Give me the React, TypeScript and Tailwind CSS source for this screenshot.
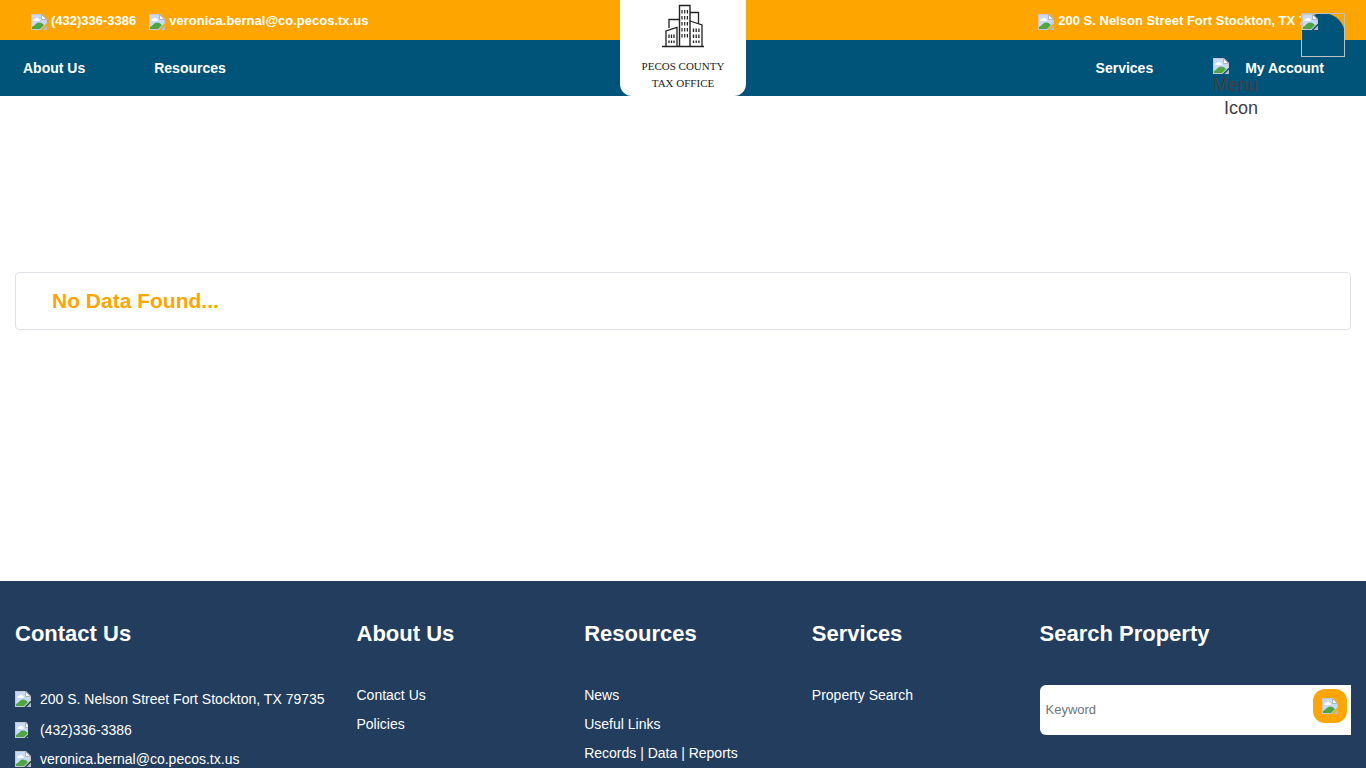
import { useState } from "react";

interface LinkColumn {
  title: string;
  links: string[];
}

const linkColumns: LinkColumn[] = [
  { title: "About Us", links: ["Contact Us", "Policies"] },
  {
    title: "Resources",
    links: ["News", "Useful Links", "Records | Data | Reports"],
  },
  { title: "Services", links: ["Property Search"] },
];

const PHONE = "(432)336-3386";
const EMAIL = "veronica.bernal@co.pecos.tx.us";
const ADDRESS = "200 S. Nelson Street Fort Stockton, TX 79735";

// Placeholder shown where an image is missing
const ImageIcon = ({ narrow = false }: { narrow?: boolean }) => (
  <svg
    viewBox={narrow ? "0 0 13 16" : "0 0 16 16"}
    className={narrow ? "h-4 w-[13px] shrink-0" : "h-4 w-4 shrink-0"}
    aria-hidden="true"
  >
    <path d="M0 0H11L16 5V9.5L9.5 16H0Z" fill="#c3c7ce" />
    <path d="M1 1H10.5L15 5.5V9L9 15H1Z" fill="#c9daf8" />
    <path
      d="M2.5 7C2 5.4 3.4 4.4 4.5 4.8C5 3.2 7.2 3.4 7.5 4.8C8.9 4.8 9.2 6.4 8.4 7Z"
      fill="#fff"
    />
    <path
      d="M1 15V13C3.5 12 5 8.5 8 8.5C10.2 8.5 11.8 9.6 12.8 11.2L9 15Z"
      fill="#4fa540"
    />
    <path d="M10.5 0.5V5.5H15.5Z" fill="#fafbfd" stroke="#b0b4bb" />
    <path d="M16 11.5V16H11.5Z" fill="#b3bccb" />
  </svg>
);

const Logo = () => (
  <a
    href="#"
    className="absolute top-0 left-1/2 flex h-24 w-[126px] -translate-x-1/2 flex-col items-center rounded-b-xl bg-white pt-1 font-['Liberation_Serif',serif] text-[11px] leading-[17px] font-normal text-[#222]"
  >
    <svg
      viewBox="0 0 44 44"
      className="mb-2.5 h-11 w-11 shrink-0"
      fill="none"
      stroke="#222"
      aria-hidden="true"
    >
      <path d="M1 42.5H43" strokeWidth="1.3" />
      <path d="M18.5 42V1.5H29V42" strokeWidth="1.4" />
      <path d="M29 8.5H37.5V19.5M29 17L41 21V42" strokeWidth="1.3" />
      <path d="M8 24V15.5H18.5M5 42V27L16 23.5V42" strokeWidth="1.3" />
      <path
        d="M21 6V34M23.7 6V34M26.4 6V34"
        strokeWidth="1.2"
        strokeDasharray="3.5 2.5"
      />
      <path
        d="M32.5 24.5V39M35.2 24.5V39M37.9 24.5V39M8 30.5V39M10.5 30.5V39M13 30.5V39"
        strokeWidth="1.3"
        strokeDasharray="3.5 2.5"
      />
    </svg>
    <span>PECOS COUNTY</span>
    <span>TAX OFFICE</span>
  </a>
);

const TopBarItem = ({ text }: { text: string }) => (
  <a href="#" className="flex gap-1">
    <span className="pt-px">
      <ImageIcon />
    </span>
    {text}
  </a>
);

const Header = () => (
  <header className="relative font-bold text-white">
    <div className="flex h-10 items-center justify-between bg-[#ffa500] px-[31px] pt-[3px] text-[13px] leading-4">
      <div className="flex gap-[13px]">
        <TopBarItem text={PHONE} />
        <TopBarItem text={EMAIL} />
      </div>
      <TopBarItem text={ADDRESS} />
    </div>

    <nav className="flex h-14 items-center justify-between bg-[#00547a] pr-[42px] pl-[23px] text-sm">
      <div className="flex gap-[69px]">
        <a href="#">About Us</a>
        <a href="#">Resources</a>
      </div>
      <div className="flex gap-[92px]">
        <a href="#">Services</a>
        <a href="#" className="relative z-10">
          My Account
        </a>
      </div>
    </nav>

    <Logo />

    {/* Menu toggle hangs over the bottom edge of the nav */}
    <button
      type="button"
      className="absolute top-[58px] right-[108px] flex w-[45px] flex-col items-end text-lg leading-[23px] font-normal text-[#404040]"
    >
      <span className="self-start">
        <ImageIcon />
      </span>
      <span>Menu</span>
      <span>Icon</span>
    </button>

    {/* Scroll to top */}
    <button
      type="button"
      aria-label="Back to top"
      className="absolute top-[13px] right-[21px] h-11 w-11 rounded-full bg-[#00547a]"
    >
      <span className="flex h-11 w-11 border border-[#c0c0c0]">
        <ImageIcon />
      </span>
    </button>
  </header>
);

const Footer = () => {
  const [keyword, setKeyword] = useState("");

  return (
    <footer className="grid grid-cols-12 bg-[#223d5e] pt-[37px] text-sm text-white">
      <div className="col-span-3 px-[15px]">
        <h2 className="mb-[33px] text-[22px] leading-8 font-bold">
          Contact Us
        </h2>
        <ul className="flex flex-col">
          <li className="flex h-8 items-center gap-[9px]">
            <ImageIcon />
            <a href="#" className="whitespace-nowrap">
              {ADDRESS}
            </a>
          </li>
          <li className="flex h-[30px] items-center gap-3">
            <ImageIcon narrow />
            <a href="#">{PHONE}</a>
          </li>
          <li className="flex h-7 items-center gap-[9px]">
            <ImageIcon />
            <a href="#">{EMAIL}</a>
          </li>
        </ul>
      </div>

      {linkColumns.map((column) => (
        <div key={column.title} className="col-span-2 px-[15px]">
          <h2 className="mb-[31px] text-[22px] leading-8 font-bold">
            {column.title}
          </h2>
          <ul>
            {column.links.map((link) => (
              <li key={link} className="leading-[29px]">
                <a href="#" className="whitespace-nowrap">
                  {link}
                </a>
              </li>
            ))}
          </ul>
        </div>
      ))}

      <div className="col-span-3 px-[15px]">
        <h2 className="mb-[35px] text-[22px] leading-8 font-bold">
          Search Property
        </h2>
        <form className="relative" onSubmit={(e) => e.preventDefault()}>
          <input
            type="text"
            aria-label="Keyword"
            placeholder="Keyword"
            value={keyword}
            onChange={(e) => setKeyword(e.target.value)}
            className="h-[50px] w-full rounded-l-md bg-white pr-12 pb-0.5 pl-1.5 text-[13px] text-gray-800 placeholder:text-[#6c757d]"
          />
          <button
            type="submit"
            aria-label="Search"
            className="absolute top-1 right-1 flex h-[34px] w-[34px] items-center justify-center rounded-xl bg-[#ffa500]"
          >
            <ImageIcon />
          </button>
        </form>
      </div>
    </footer>
  );
};

const App = () => {
  return (
    <div className="min-h-screen bg-white font-['Liberation_Sans',Arial,sans-serif]">
      <Header />
      <main className="px-[15px] pt-44 pb-[251px]">
        <div className="rounded border border-[#dee2e6] px-9 py-3">
          <h1 className="text-[21px] leading-8 font-bold text-[#ffa500]">
            No Data Found...
          </h1>
        </div>
      </main>
      <Footer />
    </div>
  );
};

export default App;
